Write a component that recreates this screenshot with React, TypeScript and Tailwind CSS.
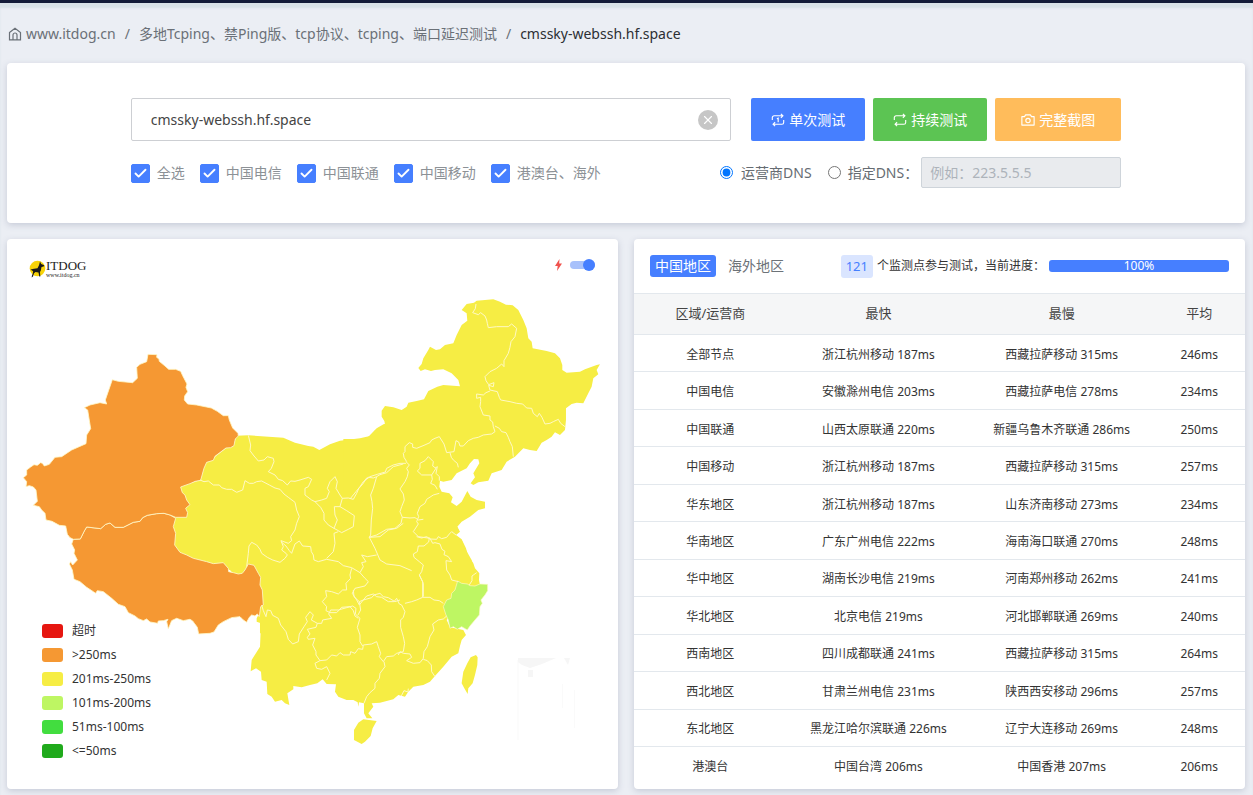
import React, { useState } from 'react';
import { Check, X } from 'lucide-react';

interface Region {
  name: string;
  fastest: string;
  slowest: string;
  average: string;
}

interface MapLayer {
  x: number;
  y: number;
  land: string[];
  borders: string[];
}

const regions: Region[] = [
  { name: '全部节点', fastest: '浙江杭州移动 187ms', slowest: '西藏拉萨移动 315ms', average: '246ms' },
  { name: '中国电信', fastest: '安徽滁州电信 203ms', slowest: '西藏拉萨电信 278ms', average: '234ms' },
  { name: '中国联通', fastest: '山西太原联通 220ms', slowest: '新疆乌鲁木齐联通 286ms', average: '250ms' },
  { name: '中国移动', fastest: '浙江杭州移动 187ms', slowest: '西藏拉萨移动 315ms', average: '257ms' },
  { name: '华东地区', fastest: '浙江杭州移动 187ms', slowest: '山东济南移动 273ms', average: '234ms' },
  { name: '华南地区', fastest: '广东广州电信 222ms', slowest: '海南海口联通 270ms', average: '248ms' },
  { name: '华中地区', fastest: '湖南长沙电信 219ms', slowest: '河南郑州移动 262ms', average: '241ms' },
  { name: '华北地区', fastest: '北京电信 219ms', slowest: '河北邯郸联通 269ms', average: '240ms' },
  { name: '西南地区', fastest: '四川成都联通 241ms', slowest: '西藏拉萨移动 315ms', average: '264ms' },
  { name: '西北地区', fastest: '甘肃兰州电信 231ms', slowest: '陕西西安移动 296ms', average: '257ms' },
  { name: '东北地区', fastest: '黑龙江哈尔滨联通 226ms', slowest: '辽宁大连移动 269ms', average: '248ms' },
  { name: '港澳台', fastest: '中国台湾 206ms', slowest: '中国香港 207ms', average: '206ms' },
];

const legend = [
  { label: '超时', color: 'bg-[#e61610]' },
  { label: '>250ms', color: 'bg-[#f59833]' },
  { label: '201ms-250ms', color: 'bg-[#f6ed44]' },
  { label: '101ms-200ms', color: 'bg-[#bef663]' },
  { label: '51ms-100ms', color: 'bg-[#42dd3f]' },
  { label: '<=50ms', color: 'bg-[#20aa1c]' },
];

const lines = ['全选', '中国电信', '中国联通', '中国移动', '港澳台、海外'];

// Each layer is a part of the country, in thirds of a pixel from its own origin
const layers: MapLayer[] = [
  {
    // north-west
    x: 180,
    y: 420,
    land: [
      'M170,47 L205,46 L310,53 L345,68 L385,78 L400,80 L418,90 L450,73 L480,62 L540,55 L570,48 L590,25 L612,12 L700,0 L700,640 L240,640 L240,560 L150,450 L-10,430 L-40,390 L-40,260 L0,200 L60,180 L75,130 L105,110 L140,83 L162,70 Z',
    ],
    borders: [
      'M205,46 L212,75 L210,92 L222,108 L235,123 L252,120 L262,110 L280,115 L282,125 L274,145 L265,155 L285,165 L295,178 L308,182 L322,195 L332,183 L345,184 L360,180 L385,172 L395,178 L385,200 L375,205 L375,225 L395,240 L405,245',
      'M405,245 L425,240 L440,235 L448,215 L442,205 L450,185 L465,170 L472,185 L468,205 L480,225 L487,235 L480,260 L463,260 L465,285 L472,300 L462,325 L445,315 L432,300 L432,280 L422,262 L405,245',
      'M487,235 L505,234 L520,238 L530,220 L536,206 L550,190 L558,176 L565,172 L580,174 L590,170 L600,164 L620,158 L640,140 L670,132',
      'M480,260 L500,272 L523,287 L520,320 L505,328 L485,338 L475,332 L462,325 M475,335 L462,340 L465,370 L460,395 L440,415',
      'M590,170 L580,205 L572,225 L576,245 L578,265 L574,300 L572,345 L568,352 L585,385 L600,420 L620,432 L660,437 L695,452',
      'M568,352 L600,350 L625,330 L650,325 L670,310',
      'M60,180 L72,185 L85,183 L100,195 L118,195 L125,203 L140,208 L155,208 L170,217 L188,210 L195,182 L208,190 L220,190 L230,185 L245,183 L268,195 L285,204 L300,208 L312,222 L325,232 L345,247 L350,270 L358,290 L350,310 L345,330 L332,350 L335,362 L325,370 L303,362 L310,380 L305,390 L318,400 L322,405 L315,415 L300,427 L278,420 L262,412 L245,400 L240,388 L230,375 L215,367 L207,378 L205,400 L200,440',
      'M303,365 L318,378 L328,392 L335,400 L345,372 L358,363 L368,378 L392,380 L394,395 L400,405 L402,420 L415,425 L440,418 L475,425 L490,437 L515,443 L540,458 L555,475 L565,485 L555,498 L525,505 L517,520 L530,540 L538,555',
      'M515,445 L510,465 L512,475 L498,490 L500,510 L488,510 L475,522 L455,515 L437,512 L440,530 L427,545 L440,560 L438,572 L450,578 L470,578 L485,562 L510,560 L520,572 L525,588 L535,595',
      'M540,458 L550,440 L545,428 L558,425 L545,405 L562,410 L590,405',
      'M538,555 L550,540 L575,533 L582,525 L600,520 L610,530 L625,533 L645,545 L660,540',
    ],
  },
  {
    // north-east
    x: 350,
    y: 290,
    land: [
      'M-20,447 L35,447 L55,440 L75,420 L105,403 L103,393 L95,380 L95,362 L105,348 L130,352 L155,360 L170,350 L175,338 L200,333 L222,328 L235,303 L262,290 L280,285 L330,289 L325,270 L305,250 L280,238 L255,240 L243,243 L225,238 L212,243 L205,234 L215,222 L220,205 L235,180 L240,170 L258,180 L270,178 L285,165 L310,160 L320,135 L335,105 L352,92 L350,70 L335,60 L350,42 L372,38 L380,32 L430,28 L450,35 L468,44 L488,46 L505,60 L520,90 L530,115 L535,145 L545,155 L548,175 L590,183 L615,190 L630,205 L637,225 L637,240 L650,248 L690,245 L705,238 L740,225 L750,223 L740,240 L745,253 L730,265 L725,290 L715,310 L700,340 L680,338 L665,342 L648,355 L648,390 L645,420 L630,435 L615,427 L605,440 L590,450 L575,458 L560,483 L540,480 L520,475 L495,500 L470,515 L455,540 L425,550 L415,572 L385,577 L370,585 L362,580 L375,562 L370,550 L388,520 L385,508 L372,507 L360,520 L350,535 L320,550 L305,570 L280,575 L270,572 L268,590 L275,605 L298,610 L308,622 L303,637 L320,648 L335,635 L352,603 L362,620 L380,630 L405,635 L405,655 L385,660 L360,680 L335,695 L322,710 L328,725 L315,735 L335,750 L335,780 L-20,780 Z',
    ],
    borders: [
      'M378,42 L376,56 L368,68 L385,74 L392,68 L405,78 L410,90 L412,100 L415,113 L440,110 L475,110 L485,102 L500,115 L495,140 L483,155 L480,172 L475,190 L462,212 L462,230 L455,222 L440,235 L420,245 L405,260 L408,272 L416,284 L432,278 L430,290 L416,286 L420,300',
      'M420,303 L408,308 L400,315 L380,312 L380,325 L392,322 L392,335 L390,350 L400,375 L420,378 L420,390 L428,396 L430,410 L435,425',
      'M420,300 L442,305 L448,322 L452,330 L480,335 L500,340 L518,342 L530,354 L545,355 L550,370 L562,380 L568,370 L576,382 L585,402 L600,400 L610,395 L625,388 L632,400 L645,410',
      'M435,408 L448,415 L455,425 L468,428 L475,442 L480,455 L487,470 L490,500',
      'M435,425 L425,432 L400,435 L385,442 L370,445 L355,452 L340,468 L330,468 L326,456 L318,452 L312,485 L290,488 L282,462 L268,440 L255,445 L245,450 L240,458 L222,466 L200,475 L188,472 L188,462 L178,458 L165,470 L165,485 L160,490 L162,502 L170,515',
      'M300,488 L304,502 L310,510 L322,520 L325,532',
      'M168,520 L150,520 L130,525 L110,535 L106,546 L82,553 L60,560 L40,575 L30,590 L18,605 L0,627',
      'M168,515 L178,525 L170,535 L175,545 L172,560 L165,575 L150,597 L160,612 L163,630 L155,650 L150,665 L157,682 L153,700 L135,715 L110,718 L80,735 L57,742',
      'M157,682 L180,684 L195,683 L205,690 L220,688 M268,610 L250,615 L230,628 L225,640 L210,650 L202,670 L206,680 L200,695 L205,702 L190,725 L205,740 L240,745',
      'M235,500 L250,515 L248,528 L258,535 L245,555 L215,555 L202,543 L210,535 L210,520 L225,512 Z',
      'M255,535 L262,530 L258,550 L268,560 L268,572 M245,555 L247,568 L242,580 L255,586 L262,598',
    ],
  },
  {
    // east coast
    x: 380,
    y: 420,
    land: [
      'M0,300 L200,300 L232,320 L240,335 L228,345 L245,358 L258,385 L265,410 L280,430 L285,445 L298,460 L297,480 L300,495 L300,540 L0,540 Z',
    ],
    borders: [
      'M110,350 L125,354 L140,350 L150,357 L170,358 L175,350 L185,356 L200,352 L208,342 L215,335 L228,345',
      'M148,353 L146,366 L132,378 L115,378 L112,395 L100,402 L102,412 L118,425 L130,435 L125,455 L118,465 L130,490 L130,530',
      'M150,355 L158,370 L165,368 L180,372 L186,388 L195,394 L192,404 L205,410 L215,425 L198,422 L200,450 L210,465 L215,480 L235,485',
      'M268,495 L276,482 L276,468 L290,458',
    ],
  },
  {
    // south
    x: 230,
    y: 540,
    land: [
      'M50,0 L695,0 L705,25 L725,60 L735,90 L745,105 L745,135 L720,140 L680,200 L650,240 L660,262 L700,270 L708,285 L695,300 L690,318 L685,340 L665,350 L640,380 L615,408 L600,425 L580,435 L550,440 L535,455 L525,470 L505,465 L490,478 L450,488 L425,490 L430,500 L415,520 L427,535 L410,535 L402,520 L402,490 L387,487 L385,500 L383,487 L370,480 L350,480 L325,470 L315,455 L318,433 L290,432 L278,418 L262,430 L240,435 L215,442 L190,438 L190,448 L172,460 L178,495 L165,490 L155,480 L135,485 L125,470 L112,462 L110,425 L95,420 L93,395 L78,385 L62,394 L65,360 L90,320 L93,250 L80,245 L80,235 L98,200 L98,150 L50,100 Z',
      'M400,538 L440,543 L428,565 L422,588 L405,605 L395,612 L372,600 L372,570 L385,548 Z',
      'M738,345 L743,352 L742,375 L735,405 L728,430 L715,445 L713,462 L703,445 L695,430 L700,395 L712,370 L722,352 Z',
    ],
    borders: [
      'M95,195 L100,212 L108,230 L112,210 L122,212 L128,226 L145,235 L152,255 L168,275 L175,298 L188,312 L205,305 L208,282 L222,260 L232,245 L227,232 L240,215 L250,225 L244,240 L262,250 L275,250 L278,240 L305,235 L296,222 L302,210 L325,210 L350,203 L368,198 L378,205 L376,222 L390,235 L382,262 L390,285 L390,305 L398,318',
      'M262,250 L258,262 L232,268 L240,282 L232,292 L235,298 L255,295 L248,315 L258,335 L258,345 L270,362',
      'M270,362 L290,360 L305,345 L320,348 L330,338 L340,345 L360,345 L362,335 L375,340 L385,326 L398,328 L400,315 L425,312 L440,305',
      'M270,362 L255,370 L260,385 L275,388 L290,380 L300,400 L290,420',
      'M388,185 L400,180 L410,168 L430,162 L440,170 L455,172 L475,185 L492,185 L500,175 L508,192 L515,195 L525,215 L520,232 L512,240 L512,262 L520,290 L524,310 L520,335 L500,340 L490,348 L470,350 L460,365 L448,350 L452,340 L445,320 L440,305',
      'M388,185 L392,210 L384,225 M370,150 L372,170 L388,185',
      'M462,365 L465,380 L450,400 L448,415 L435,430 L435,445 L420,458 L410,470 L402,490',
      'M505,345 L510,335 L520,340 L540,342 L545,352 L530,362 L550,370 L570,368 L580,355 L582,335 L592,320 L600,290 L612,270 L608,252 L625,240 L640,237 L650,228',
      'M580,358 L592,362 L604,375 L605,395 L615,410',
      'M525,190 L545,185 L560,180 L578,172 L600,172 L612,180 L628,182 L640,190',
      'M568,105 L578,125 L578,172',
      'M514,468 L522,452 L534,456 L535,446',
    ],
  },
];

const xinjiang =
  'M414,43 L441,44 L440,52 L447,57 L448,64 L465,78 L476,88 L497,88 L512,94 L518,107 L531,132 L528,142 L533,155 L524,168 L523,180 L533,192 L560,195 L604,204 L622,214 L640,227 L655,227 L658,240 L668,264 L684,280 L685,288 L676,297 L672,317 L662,323 L648,324 L615,349 L610,361 L590,367 L582,385 L572,421 L556,424 L540,431 L512,441 L517,458 L525,465 L530,480 L540,494 L527,505 L533,518 L530,532 L497,532 L480,525 L462,520 L440,521 L412,526 L398,533 L390,544 L370,547 L340,562 L315,562 L300,549 L287,553 L272,566 L230,561 L223,573 L211,597 L190,598 L180,593 L172,583 L167,558 L148,556 L126,544 L108,540 L105,520 L95,510 L88,500 L70,496 L82,484 L78,450 L70,441 L58,437 L48,440 L50,425 L40,413 L50,405 L50,390 L62,381 L72,374 L82,376 L92,368 L97,370 L103,378 L118,373 L135,352 L155,350 L185,330 L228,311 L230,285 L242,266 L233,210 L223,203 L240,195 L270,188 L290,192 L286,180 L307,119 L325,124 L368,128 L382,115 L380,82 L390,73 L410,65 Z';

const tibet =
  'M190,598 L211,597 L223,573 L230,561 L272,566 L287,553 L300,549 L315,562 L340,562 L370,547 L390,544 L398,533 L412,526 L440,521 L462,520 L480,525 L497,535 L490,560 L497,580 L494,615 L510,637 L530,645 L550,655 L590,665 L610,671 L640,668 L655,685 L656,695 L670,698 L685,702 L697,700 L705,690 L715,672 L732,676 L745,700 L752,712 L750,735 L757,750 L760,795 L752,800 L748,830 L742,822 L735,828 L725,825 L718,832 L710,847 L700,840 L690,830 L665,833 L640,845 L625,855 L612,876 L600,880 L566,882 L562,862 L553,850 L548,843 L540,838 L520,842 L500,835 L485,842 L475,867 L470,845 L474,838 L460,842 L445,843 L443,850 L420,846 L410,837 L400,842 L385,836 L375,828 L355,818 L345,800 L325,793 L305,775 L280,755 L262,752 L257,760 L250,755 L230,742 L210,725 L192,718 L187,690 L178,672 L182,665 L188,675 L202,660 L192,640 L194,630 L185,612 Z';

const zhejiang =
  'M683,123 L695,130 L712,132 L720,137 L735,138 L750,132 L773,133 L773,152 L765,165 L753,180 L757,190 L750,200 L748,225 L735,240 L720,258 L712,270 L695,260 L682,268 L670,260 L660,265 L655,240 L648,225 L640,200 L650,180 L663,175 L665,160 L675,150 Z';

const RepeatIcon: React.FC<{ once?: boolean }> = ({ once }) => (
  <svg viewBox="0 0 16 16" className="h-3.5 w-3.5" fill="none" stroke="currentColor" strokeWidth="1.3">
    <path d="M1.5 8V5.2a2 2 0 0 1 2-2h10M11.3 1l2.3 2.2-2.3 2.2M14.5 8v2.8a2 2 0 0 1-2 2h-10M4.7 10.6l-2.3 2.2 2.3 2.2" />
    {once && <path d="M6.7 6.7 8.2 5.9v4.6" />}
  </svg>
);

const CameraIcon: React.FC = () => (
  <svg viewBox="0 0 16 16" className="h-3.5 w-3.5" fill="none" stroke="currentColor" strokeWidth="1.3">
    <path d="M1 4.2h3l1.300-2h5.400l1.300 2h3v9.600H1z" strokeLinejoin="round" />
    <circle cx="8" cy="8.600" r="2.500" />
  </svg>
);

const HomeIcon: React.FC = () => (
  <svg viewBox="0 0 14 14" className="h-3.5 w-3.5" fill="none" stroke="currentColor" strokeWidth="1.2">
    <path d="M1.500 5.500 7 1.200l5.500 4.300v7.300h-11zM5 12.800V8a2 2 0 0 1 4 0v4.800" />
  </svg>
);

const Logo: React.FC = () => (
  <div className="flex items-center" aria-label="ITDOG">
    <svg viewBox="0 0 17 18" className="h-[18px] w-[17px]">
      <circle cx="8.500" cy="8.500" r="7.800" fill="#f7d308" />
      <path
        d="M11 1.500 12.200 4l3 1.300-.5 1.200-2.200.5-.7 3.500-.8 1.500.3 4.500h-1l-.8-4-3-.5-1.500 1.200-1 3.300-1.300 1 .2-1.700 1-2.500.2-2L1.500 9.500 5 8.800l3.500-.6 1.500-3z"
        fill="#1a1a1a"
      />
    </svg>
    <div className="font-['Liberation_Serif',serif] text-[#222]">
      <div className="text-[13px] leading-[13px]">ITDOG</div>
      <div className="text-[6px] leading-[6px]">www.itdog.cn</div>
    </div>
  </div>
);

const ChinaMap: React.FC = () => (
  <svg viewBox="7 295 611 494" className="block w-full" role="img" aria-label="中国地区">
    {layers.map((layer) => (
      <g key={`${layer.x}-${layer.y}`} transform={`translate(${layer.x} ${layer.y}) scale(0.3333)`} fill="#f6ed44">
        {layer.land.map((d) => (
          <path key={d} d={d} />
        ))}
      </g>
    ))}
    <g transform="translate(10 340) scale(0.3333)" fill="#f59833" stroke="#fff8c8" strokeWidth="2.5">
      <path d={tibet} />
      <path d={xinjiang} />
    </g>
    <g transform="translate(230 540) scale(0.3333)" fill="#bef663" stroke="#fff8c8" strokeWidth="2">
      <path d={zhejiang} />
    </g>
    {layers.map((layer) => (
      <g
        key={`${layer.x}-${layer.y}`}
        transform={`translate(${layer.x} ${layer.y}) scale(0.3333)`}
        fill="none"
        stroke="#fff9c4"
        strokeWidth="3"
        strokeLinejoin="round"
      >
        {layer.borders.map((d) => (
          <path key={d} d={d} />
        ))}
      </g>
    ))}
    <g fill="#f6f6f6">
      <path d="M518 658h38l-14 6-12 4-8-3-4-3zM528 670h5v7h-5zM564 658h6l-2 7z" />
      <path d="M517.5 660h1v80h-1zM562 684h1v24h-1zM574 690h1v38h-1z" opacity=".6" />
    </g>
  </svg>
);

const SearchPanel: React.FC = () => {
  const [host, setHost] = useState('cmssky-webssh.hf.space');
  const button = 'flex h-[43px] items-center gap-1 rounded-xs text-white cursor-pointer';

  return (
    <section className="rounded-sm bg-white pt-[35px] pb-[35px] shadow-[0_2px_6px_rgba(90,100,130,0.25)]">
      <div className="mx-auto w-4/5">
        <div className="flex items-center gap-2">
          <div className="mr-3 flex h-[43px] flex-1 items-center rounded-xs border border-[#cdcfd3] pr-3 pl-[19px]">
            <input
              aria-label="域名"
              value={host}
              onChange={(e) => setHost(e.target.value)}
              className="min-w-0 flex-1 text-[#444] outline-none"
            />
            <button
              aria-label="清空"
              onClick={() => setHost('')}
              className="grid h-5 w-5 place-items-center rounded-full bg-[#c6c6c6] text-white"
            >
              <X className="h-3.5 w-3.5" strokeWidth={2} />
            </button>
          </div>
          <button className={`${button} bg-[#467fff] px-5`}>
            <RepeatIcon once />
            单次测试
          </button>
          <button className={`${button} bg-[#5cc453] px-5`}>
            <RepeatIcon />
            持续测试
          </button>
          <button className={`${button} bg-[#ffbc5b] px-[26px]`}>
            <CameraIcon />
            完整截图
          </button>
        </div>

        <div className="mt-4 flex items-center justify-between">
          <div className="flex items-center gap-[15px] pt-px text-[#8c9196]">
            {lines.map((line) => (
              <label key={line} className="flex items-center gap-[7px]">
                <span className="grid">
                  <input
                    type="checkbox"
                    defaultChecked
                    className="peer col-start-1 row-start-1 h-[19px] w-[19px] appearance-none rounded-xs border border-gray-300 checked:border-[#467fff] checked:bg-[#467fff]"
                  />
                  <Check
                    className="pointer-events-none invisible col-start-1 row-start-1 h-[15px] w-[15px] place-self-center text-white peer-checked:visible"
                    strokeWidth={3}
                  />
                </span>
                {line}
              </label>
            ))}
          </div>
          <div className="flex items-center text-[#666c72]">
            <label className="mr-4 flex items-center gap-2">
              <input type="radio" name="dns" defaultChecked className="h-[13px] w-[13px] accent-[#0075ff]" />
              运营商DNS
            </label>
            <label className="mr-[3px] flex items-center gap-[7px]">
              <input type="radio" name="dns" className="h-[13px] w-[13px]" />
              指定DNS：
            </label>
            <input
              aria-label="指定DNS"
              disabled
              placeholder="例如：223.5.5.5"
              className="h-[31px] w-[200px] rounded-xs border border-[#ced4da] bg-[#e9ebee] px-2 placeholder:text-[#adb3ba]"
            />
          </div>
        </div>
      </div>
    </section>
  );
};

const MapPanel: React.FC = () => (
  <section className="relative rounded-sm bg-white shadow-[0_2px_6px_rgba(90,100,130,0.25)]">
    <div className="flex h-14 items-start justify-between pt-5 pr-[23px] pl-[22px]">
      <Logo />
      <label className="flex items-center gap-2" aria-label="动画">
        <svg viewBox="0 0 7 12" className="h-3 w-[7px]">
          <path d="M4.5 0 0 7h2.7L2 12l5-7.500H4.200z" fill="#f0524d" />
        </svg>
        <input
          type="checkbox"
          role="switch"
          defaultChecked
          className="flex h-2 w-[25px] appearance-none items-center justify-end rounded-full bg-gray-300 after:h-3 after:w-3 after:rounded-full after:bg-[#467fff] checked:bg-[#a8c1fb]"
        />
      </label>
    </div>
    <ChinaMap />
    <ul className="absolute bottom-[26px] left-[35px] text-xs leading-6 text-[#333]">
      {legend.map((entry) => (
        <li key={entry.label} className="flex items-center gap-[9px]">
          <span className={`h-3.5 w-[21px] rounded-[3px] ${entry.color}`} />
          {entry.label}
        </li>
      ))}
    </ul>
  </section>
);

const ResultPanel: React.FC = () => (
  <section className="rounded-sm bg-white shadow-[0_2px_6px_rgba(90,100,130,0.25)]">
    <div className="flex h-[54px] items-center justify-between px-4">
      <div className="flex items-center gap-2">
        <button className="h-[22px] rounded-[3px] bg-[#467fff] px-[5px] leading-[22px] text-white">中国地区</button>
        <button className="h-[22px] px-1 leading-[22px] text-[#6c7278]">海外地区</button>
      </div>
      <div className="flex items-center text-xs text-[#333]">
        <span className="mr-1 h-[23px] rounded-[3px] bg-[#dae5ff] px-[5px] text-[13px] leading-[23px] text-[#467fff]">121</span>
        个监测点参与测试，当前进度：
        <div
          role="progressbar"
          aria-valuenow={100}
          className="ml-1 h-3 w-[180px] rounded-[3px] bg-[#467fff] text-center leading-3 text-white"
        >
          100%
        </div>
      </div>
    </div>
    <table className="h-[491px] w-full table-fixed border-collapse text-center text-xs text-[#333]">
      <thead>
        <tr className="h-[41px] border-y border-[#e3e8ed] bg-[#f5f6f7] text-[13px] text-[#444]">
          <th className="w-[25%] font-normal">区域/运营商</th>
          <th className="w-[30%] font-normal">最快</th>
          <th className="w-[30%] font-normal">最慢</th>
          <th className="w-[15%] font-normal">平均</th>
        </tr>
      </thead>
      <tbody>
        {regions.map((region) => (
          <tr key={region.name} className="h-[37px] border-b border-[#e3e8ed] last:border-0 *:pt-[3px]">
            <td>{region.name}</td>
            <td>{region.fastest}</td>
            <td>{region.slowest}</td>
            <td>{region.average}</td>
          </tr>
        ))}
      </tbody>
    </table>
  </section>
);

export default function App() {
  return (
    <div className="min-h-screen border-t-[3px] border-[#141c38] bg-[#ebeef4] pr-2 pb-1.5 pl-[7px] font-['Noto_Sans','Noto_Sans_CJK_SC',sans-serif] text-sm shadow-[inset_0_5px_2px_#d9e2e7]">
      <nav className="flex h-[60px] items-center gap-[9px] pt-0.5 pl-px text-[#6a7077]">
        <a href="#" className="flex items-center gap-1">
          <HomeIcon />
          www.itdog.cn
        </a>
        <span>/</span>
        <a href="#">多地Tcping、禁Ping版、tcp协议、tcping、端口延迟测试</a>
        <span>/</span>
        <span className="text-[#2c2f33]">cmssky-webssh.hf.space</span>
      </nav>
      <main className="grid gap-4">
        <SearchPanel />
        <div className="grid grid-cols-2 gap-4">
          <MapPanel />
          <ResultPanel />
        </div>
      </main>
    </div>
  );
}
